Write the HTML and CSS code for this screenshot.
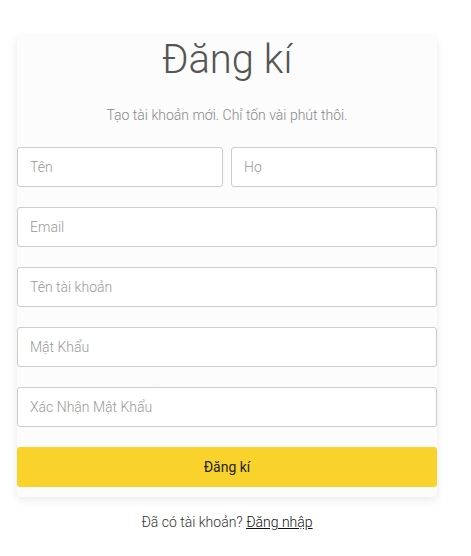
FILE: index.html
```html
<!DOCTYPE html>
<html lang="vi">
<head>
<meta charset="utf-8">
<link rel="stylesheet" href="styles.css">
</head>
<body>
<div class="page">
  <form class="card">
    <h1 class="title">Đăng kí</h1>
    <p class="subtitle">Tạo tài khoản mới. Chỉ tốn vài phút thôi.</p>
    <div class="row">
      <input class="field" type="text" placeholder="Tên">
      <input class="field" type="text" placeholder="Họ">
    </div>
    <input class="field" type="email" placeholder="Email">
    <input class="field" type="text" placeholder="Tên tài khoản">
    <input class="field" type="password" placeholder="Mật Khẩu">
    <input class="field" type="password" placeholder="Xác Nhận Mật Khẩu">
    <button class="submit" type="button">Đăng kí</button>
  </form>
  <p class="footer">Đã có tài khoản? <a class="link" href="#">Đăng nhập</a></p>
</div>
</body>
</html>
```
FILE: styles.css
```css
* { box-sizing: border-box; }
html, body { margin: 0; padding: 0; background: #ffffff; }
body { font-family: Roboto, "Noto Sans", sans-serif; }
.page { padding-top: 36px; padding-left: 17px; width: 437px; }
.card {
  width: 420px;
  background: #fcfcfc;
  border-radius: 5px;
  box-shadow: 0 3px 10px rgba(0,0,0,0.09);
  padding: 0 0 10px 0;
  display: flex;
  flex-direction: column;
  gap: 20px;
}
.title {
  margin: 0;
  font-size: 40px;
  line-height: 48px;
  font-weight: 300;
  color: #555555;
  text-align: center;
}
.subtitle {
  margin: 1px 0 2px 0;
  font-size: 14px;
  line-height: 20px;
  font-weight: 300;
  color: #888888;
  text-align: center;
}
.row { display: flex; gap: 8px; }
.row .field { flex: 1; min-width: 0; }
.field {
  height: 40px;
  width: 100%;
  border: 1px solid #cccccc;
  border-radius: 3px;
  background: #ffffff;
  padding: 0 12px;
  font-family: Roboto, "Noto Sans", sans-serif;
  font-size: 14px;
  font-weight: 300;
  line-height: 20px;
  color: #333;
  outline: none;
}
.field::placeholder { color: #999999; opacity: 1; }
.submit {
  height: 40px;
  width: 100%;
  border: none;
  border-radius: 3px;
  background: #f9d32b;
  font-family: Roboto, "Noto Sans", sans-serif;
  font-size: 14px;
  font-weight: 400;
  color: #222222;
}
.footer {
  width: 420px;
  margin: 15px 0 0 0;
  font-size: 14px;
  line-height: 20px;
  font-weight: 300;
  color: #333333;
  text-align: center;
}
.link { color: #111111; text-decoration: underline; font-weight: 300; }
```
